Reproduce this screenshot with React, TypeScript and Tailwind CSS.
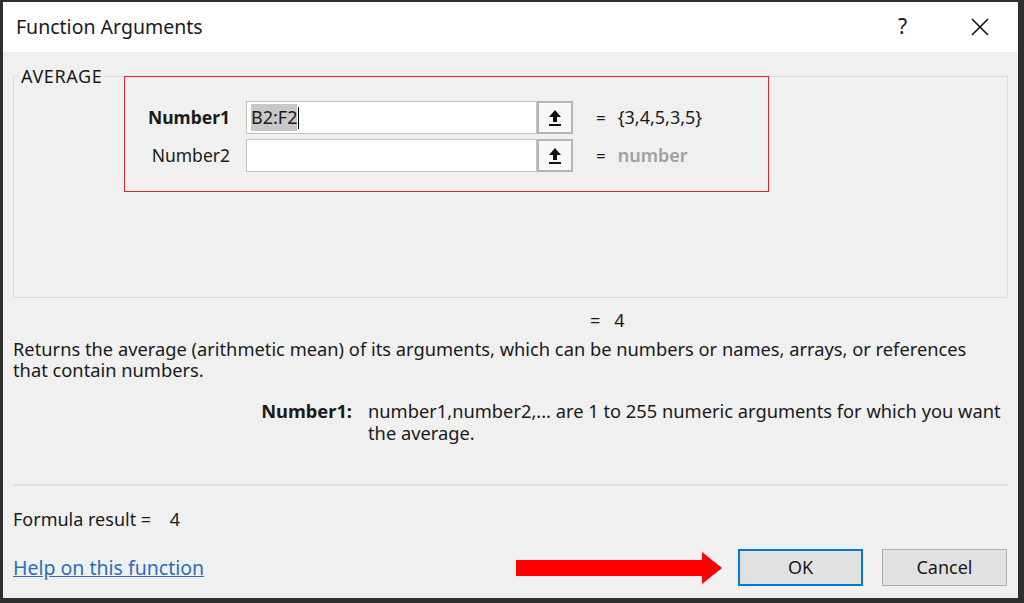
import React from 'react';

const font = { fontFamily: '"Noto Sans", "Open Sans", sans-serif' };

function RefButton() {
  return (
    <div className="flex h-full w-[36px] items-center justify-center border-2 border-[#b4b4b4] bg-[#f7f7f7]">
      <svg width="14" height="18" viewBox="0 0 14 18">
        <path d="M7 1 L13 8 H9 V13 H5 V8 H1 Z" fill="#111" />
        <rect x="1" y="15" width="12" height="2" fill="#111" />
      </svg>
    </div>
  );
}

function ArgRow({ label, bold, value, result, muted }: { label: string; bold?: boolean; value?: string; result: string; muted?: boolean }) {
  return (
    <div className="flex h-[33px] items-center">
      <div className={`w-[232px] pr-[16px] text-right text-[17.5px] ${bold ? 'font-bold' : ''} text-[#1a1a1a]`}>{label}</div>
      <div className="flex h-full w-[327px]">
        <div className="flex flex-1 items-center border border-[#c3c3c3] bg-white pl-[4px] text-[18px] text-[#1a1a1a]">
          {value && (
            <>
              <span className="bg-[#c8c8c8]">{value}</span>
              <span className="ml-px h-[22px] w-px bg-black" />
            </>
          )}
        </div>
        <RefButton />
      </div>
      <div className="ml-[23px] text-[17px] text-[#1a1a1a]">=</div>
      <div className={`ml-[12px] text-[18px] ${muted ? 'font-semibold text-[#a0a0a0]' : 'text-[#1a1a1a]'}`}>{result}</div>
    </div>
  );
}

export default function App() {
  return (
    <div className="flex h-[603px] w-[1024px] bg-[#2e2e2e] pb-[5px] pl-[3px] pr-[6px] pt-[2px]" style={font}>
      <div className="flex flex-1 flex-col bg-[#f0f0f0] text-[#1a1a1a]">
        {/* title bar */}
        <div className="flex h-[50px] shrink-0 items-center bg-white pl-[13px] pr-[28px]">
          <div className="flex-1 text-[19.5px] text-[#1a1a1a]">Function Arguments</div>
          <div className="mr-[63px] text-[21px]">?</div>
          <svg width="20" height="20" viewBox="0 0 20 20">
            <path d="M2 2 L18 18 M18 2 L2 18" stroke="#111" strokeWidth="1.6" />
          </svg>
        </div>

        <div className="flex flex-1 flex-col px-[10px]">
          {/* group box */}
          <div className="relative mt-[24px] h-[222px] border border-[#dcdcdc]">
            <span className="absolute -top-[13px] left-[5px] bg-[#f0f0f0] px-[2px] text-[18px] leading-[24px] tracking-[0.6px]">AVERAGE</span>
            <div className="absolute -top-[1px] left-[110px] h-[116px] w-[645px] border-[1.5px] border-[#e0262b]" />
            <div className="flex flex-col gap-[5px] pt-[24px]">
              <ArgRow label="Number1" bold value="B2:F2" result="{3,4,5,3,5}" />
              <ArgRow label="Number2" result="number" muted />
            </div>
          </div>

          <div className="mt-[10px] pl-[577px] text-[18px] leading-[24px]">=&nbsp;&nbsp;&nbsp;4</div>
          <p className="mt-[6px] max-w-[975px] text-[18.3px] leading-[21px]">
            Returns the average (arithmetic mean) of its arguments, which can be numbers or names, arrays, or references that contain numbers.
          </p>

          <div className="mt-[20px] flex text-[18.3px] leading-[22px]">
            <div className="w-[355px] shrink-0 pr-[16px] text-right font-bold">Number1:</div>
            <div className="flex-1">number1,number2,... are 1 to 255 numeric arguments for which you want the average.</div>
          </div>

          <div className="mt-[40px] h-[2px] bg-[#e0e0e0]" />

          <div className="mt-[20px] text-[18px] leading-[27px]">Formula result =&nbsp;&nbsp;&nbsp;&nbsp;4</div>

          <div className="mt-[16px] flex items-center">
            <a href="#" className="flex-1 text-[19.5px] text-[#2a6ebb] underline">Help on this function</a>
            <svg width="210" height="34" viewBox="0 0 210 34" className="mr-[14px]">
              <path d="M2 9 H188 V1 L208 17 L188 33 V25 H2 Z" fill="#ff0000" />
            </svg>
            <button className="h-[37px] w-[125px] border-2 border-[#0078d7] bg-[#e1e1e1] text-[18px]">OK</button>
            <button className="ml-[19px] mr-[1px] h-[37px] w-[125px] border border-[#adadad] bg-[#e1e1e1] text-[18px]">Cancel</button>
          </div>
        </div>
      </div>
    </div>
  );
}
